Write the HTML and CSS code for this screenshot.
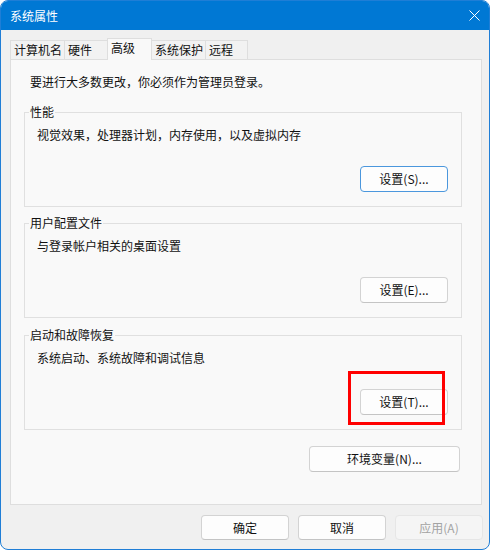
FILE: index.html
```html
<!DOCTYPE html>
<html lang="zh-CN">
<head>
<meta charset="utf-8">
<title>系统属性</title>
<link rel="stylesheet" href="styles.css">
</head>
<body>
<div class="window">
  <div class="titlebar">
    <span class="title">系统属性</span>
    <span class="close" aria-label="关闭">
      <svg width="11" height="11" viewBox="0 0 11 11"><path d="M0.5 0.5L10.5 10.5M10.5 0.5L0.5 10.5" stroke="#ffffff" stroke-width="1" fill="none"/></svg>
    </span>
  </div>
  <div class="content">
    <div class="tabs">
      <div class="tab">计算机名</div>
      <div class="tab">硬件</div>
      <div class="tab active">高级</div>
      <div class="tab">系统保护</div>
      <div class="tab">远程</div>
      <div class="tab-fill"></div>
    </div>
    <div class="panel">
      <p class="note">要进行大多数更改，你必须作为管理员登录。</p>
      <fieldset class="group">
        <legend>性能</legend>
        <div class="group-body">
          <p class="desc">视觉效果，处理器计划，内存使用，以及虚拟内存</p>
          <div class="group-actions"><button class="btn default">设置(S)...</button></div>
        </div>
      </fieldset>
      <fieldset class="group">
        <legend>用户配置文件</legend>
        <div class="group-body">
          <p class="desc">与登录帐户相关的桌面设置</p>
          <div class="group-actions"><button class="btn">设置(E)...</button></div>
        </div>
      </fieldset>
      <fieldset class="group last">
        <legend>启动和故障恢复</legend>
        <div class="group-body">
          <p class="desc">系统启动、系统故障和调试信息</p>
          <div class="group-actions"><button class="btn">设置(T)...</button></div>
        </div>
      </fieldset>
      <div class="env-row"><button class="btn wide">环境变量(N)...</button></div>
    </div>
    <div class="footer">
      <button class="btn">确定</button>
      <button class="btn">取消</button>
      <button class="btn disabled" disabled>应用(A)</button>
    </div>
  </div>
  <div class="annotation"></div>
</div>
</body>
</html>
```
FILE: styles.css
```css
* { box-sizing: border-box; }
html, body { margin: 0; padding: 0; background: #ffffff; }
body {
  font-family: "Noto Sans CJK SC", "Microsoft YaHei UI", "Noto Sans", sans-serif;
  font-size: 12px;
  line-height: 16px;
  color: #111111;
}
.window {
  position: relative;
  width: 490px;
  height: 550px;
  border: 1px solid #1f7ed6;
  border-radius: 8px;
  background: #f0f0f0;
  overflow: hidden;
  display: flex;
  flex-direction: column;
}
.titlebar {
  height: 29px;
  flex: 0 0 29px;
  background: #0078d4;
  color: #ffffff;
  display: flex;
  align-items: center;
  justify-content: space-between;
  padding: 1px 9px 0 9px;
}
.title { font-size: 12px; line-height: 16px; }
.close { display: flex; width: 11px; height: 11px; margin-top: -2px; }
.content {
  flex: 1;
  padding: 8px 7px 0 9px;
  display: flex;
  flex-direction: column;
}
.tabs {
  display: flex;
  align-items: flex-end;
  height: 22px;
}
.tab {
  height: 20px;
  min-width: 42px;
  padding: 0 2px 0 3px;
  line-height: 18px;
  border: 1px solid #dedede;
  border-left: none;
  background: #f2f2f2;
  color: #111111;
  white-space: nowrap;
}
.tab:first-child { border-left: 1px solid #dedede; }
.tab:has(+ .active) { border-right: none; }
.tab.active {
  height: 22px;
  min-width: 45px;
  padding-top: 1px;
  line-height: 16px;
  border-left: 1px solid #dedede;
  border-bottom: none;
  background: #f9f9f9;
}
.tab-fill {
  flex: 1;
  border-bottom: 1px solid #dedede;
}
.panel {
  height: 445px;
  flex: 0 0 445px;
  background: #f9f9f9;
  border: 1px solid #dedede;
  border-top: none;
  padding: 14px 19px 0 13px;
}
.note { margin: 0 0 14px 0; padding-left: 6px; }
.group {
  margin: 0;
  padding: 0;
  border: 1px solid #e0e0e0;
  min-width: 0;
}
.group + .group { margin-top: 8px; }
.group.last { margin-top: 9px; }
.group legend {
  margin-left: 4px;
  padding: 0 1px;
  line-height: 16px;
  color: #111111;
}
.group-body { padding: 7px 13px 14px 12px; }
.desc { margin: 0; }
.group-actions {
  display: flex;
  justify-content: flex-end;
  margin-top: 23px;
}
.btn {
  font-family: inherit;
  font-size: 12px;
  line-height: 16px;
  color: #111111;
  width: 88px;
  height: 26px;
  padding: 0;
  background: #fdfdfd;
  border: 1px solid #d3d3d3;
  border-bottom-color: #c4c4c4;
  border-radius: 4px;
}
.btn.default { border-color: #4b97dd; }
.btn.wide { width: 151px; }
.env-row {
  display: flex;
  justify-content: flex-end;
  padding-right: 2px;
  margin-top: 16px;
}
.footer {
  display: flex;
  justify-content: flex-end;
  gap: 9px;
  margin-top: 10px;
  margin-right: -1px;
}
.footer .btn { height: 25px; }
.btn.disabled {
  background: #f5f5f5;
  border-color: #e6e6e6;
  color: #a3a3a3;
}
.annotation {
  position: absolute;
  left: 347px;
  top: 370px;
  width: 97px;
  height: 54px;
  border: 3px solid #ff0000;
}
```
